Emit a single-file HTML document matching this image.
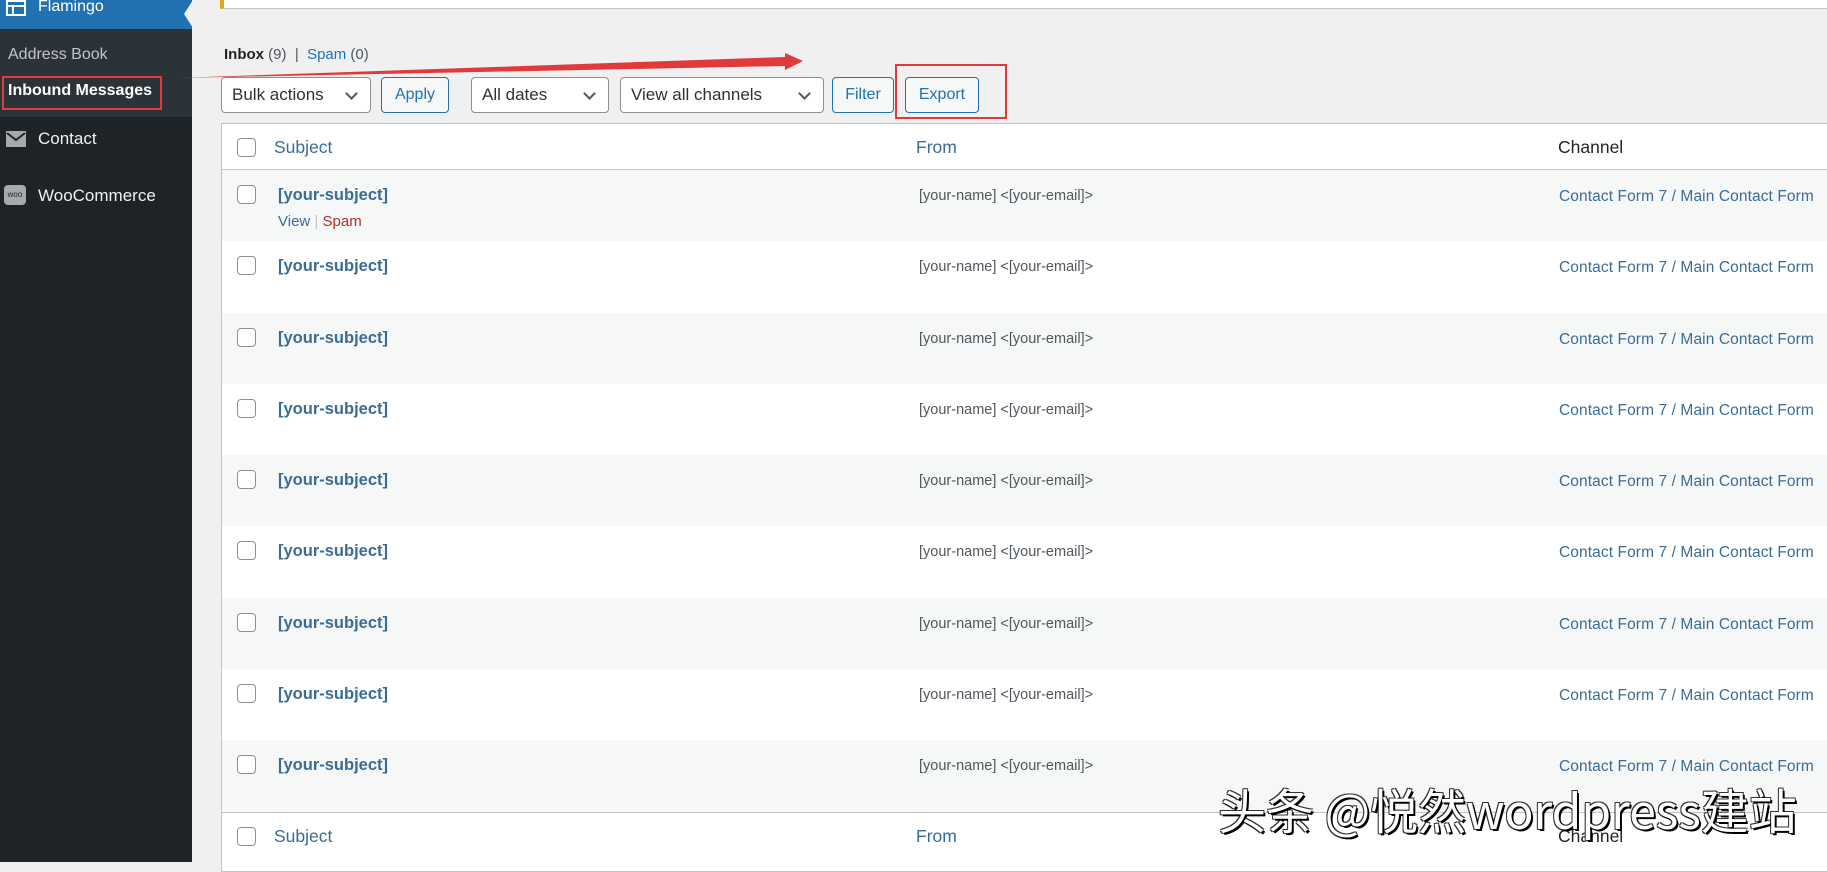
<!DOCTYPE html>
<html><head><meta charset="utf-8"><style>
*{box-sizing:border-box;margin:0;padding:0}
body{width:1827px;height:862px;overflow:hidden;background:#f0f0f1;font-family:"Liberation Sans","Noto Sans CJK SC",sans-serif;position:relative;color:#3c434a}
.sb{position:absolute;left:0;top:0;width:192px;height:862px;background:#1d2327}
.fl{position:absolute;left:0;top:0;width:192px;height:29px;background:#2271b1;color:#fff;font-size:16px;padding:0 0 0 38px;line-height:14px}
.sub{position:absolute;left:0;top:29px;width:192px;height:88px;background:#2c3338}
.a{position:absolute;color:#fff;font-size:17px}
.box{position:absolute;border:2px solid #e03a3a}
.sel{position:absolute;top:77px;height:36px;background:#fff;border:1px solid #8c8f94;border-radius:4px;font-size:17px;color:#2c3338;padding:8px 10px;line-height:18px}
.sel:after{content:"";position:absolute;right:14px;top:11px;width:7px;height:7px;border-right:2px solid #50575e;border-bottom:2px solid #50575e;transform:rotate(45deg)}
.btn{position:absolute;top:77px;height:36px;background:#f6f7f7;border:1px solid #2271b1;border-radius:4px;color:#2271b1;font-size:16px;text-align:center;line-height:34px}
.tbl{position:absolute;left:221px;top:123px;width:1606px;border-left:1px solid #c3c4c7}
.row{position:relative;height:71.3px}
.cb{position:absolute;left:15px;width:19px;height:19px;border:1.5px solid #8c8f94;border-radius:4px;background:#fff}
.s{position:absolute;left:56px;top:16px;font-size:16.5px;font-weight:bold;color:#3a6c96}
.f{position:absolute;left:697px;top:18px;font-size:14.5px;color:#50575e}
.c{position:absolute;left:1337px;top:18px;font-size:15.5px;color:#3a6c96;letter-spacing:0.1px}
.h{height:47px;background:#fff;border-bottom:1px solid #c3c4c7;border-top:1px solid #c3c4c7}
.h span{position:absolute;top:13px;font-size:17.5px;color:#3a6c96}
</style></head><body>
<div class="sb">
 <div class="fl"><svg style="position:absolute;left:6px;top:0" width="20" height="16"><rect x="1" y="1" width="18" height="14" fill="none" stroke="#fff" stroke-width="2"/><line x1="1" y1="6" x2="19" y2="6" stroke="#fff" stroke-width="2"/><line x1="7" y1="6" x2="7" y2="15" stroke="#fff" stroke-width="2"/></svg>Flamingo</div>
 <div style="position:absolute;left:184px;top:0;width:0;height:0;border-top:14px solid transparent;border-bottom:14px solid transparent;border-right:9px solid #f0f0f1"></div>
 <div class="sub"></div>
 <div class="a" style="left:8px;top:46px;color:#c3c4c7;font-size:16px">Address Book</div>
 <div class="a" style="left:8px;top:82px;font-weight:bold;font-size:16px">Inbound Messages</div>
 <div class="box" style="left:2px;top:76px;width:160px;height:34px"></div>
 <svg style="position:absolute;left:6px;top:131px" width="20" height="16"><rect x="0" y="0" width="20" height="16" fill="#a7aaad"/><polyline points="1,2 10,9 19,2" fill="none" stroke="#1d2327" stroke-width="2"/></svg>
 <div class="a" style="left:38px;top:129px;color:#f0f0f1">Contact</div>
 <div style="position:absolute;left:4px;top:185px;width:22px;height:20px;background:#a7aaad;border-radius:4px;font-size:8px;color:#1d2327;text-align:center;line-height:20px">woo</div>
 <div class="a" style="left:38px;top:186px;color:#f0f0f1">WooCommerce</div>
</div>
<div style="position:absolute;left:220px;top:0;width:1607px;height:9px;background:#fff;border-left:4px solid #dba617;border-bottom:1px solid #c3c4c7"></div>
<div style="position:absolute;left:224px;top:46px;font-size:15px;color:#50575e"><b style="color:#1d2327">Inbox</b> (9) &nbsp;| &nbsp;<span style="color:#2271b1">Spam</span> (0)</div>
<div class="sel" style="left:221px;width:150px">Bulk actions</div>
<div class="btn" style="left:381px;width:68px">Apply</div>
<div class="sel" style="left:471px;width:138px">All dates</div>
<div class="sel" style="left:620px;width:204px">View all channels</div>
<div class="btn" style="left:832px;width:62px">Filter</div>
<div class="btn" style="left:905px;width:74px">Export</div>
<div class="box" style="left:895px;top:64px;width:112px;height:55px"></div>
<svg style="position:absolute;left:0;top:0" width="820" height="90"><polygon points="175,78 785,57 785,53 803,61 785,70 785,66" fill="#e03a3a"/></svg>
<div class="tbl">
 <div class="row h"><div class="cb" style="top:14px"></div><span style="left:52px">Subject</span><span style="left:694px">From</span><span style="left:1336px;color:#1d2327">Channel</span></div>
 <div class="row" style="background:#f6f7f7"><div class="cb" style="top:15px"></div><div class="s">[your-subject]</div><div style="position:absolute;left:56px;top:43px;font-size:15px;color:#3a6c96">View <span style="color:#c3c4c7">|</span> <span style="color:#b32d2e">Spam</span></div><div class="f">[your-name] &lt;[your-email]&gt;</div><div class="c">Contact Form 7 / Main Contact Form</div></div>
 <div class="row" style="background:#fff"><div class="cb" style="top:15px"></div><div class="s">[your-subject]</div><div class="f">[your-name] &lt;[your-email]&gt;</div><div class="c">Contact Form 7 / Main Contact Form</div></div>
 <div class="row" style="background:#f6f7f7"><div class="cb" style="top:15px"></div><div class="s">[your-subject]</div><div class="f">[your-name] &lt;[your-email]&gt;</div><div class="c">Contact Form 7 / Main Contact Form</div></div>
 <div class="row" style="background:#fff"><div class="cb" style="top:15px"></div><div class="s">[your-subject]</div><div class="f">[your-name] &lt;[your-email]&gt;</div><div class="c">Contact Form 7 / Main Contact Form</div></div>
 <div class="row" style="background:#f6f7f7"><div class="cb" style="top:15px"></div><div class="s">[your-subject]</div><div class="f">[your-name] &lt;[your-email]&gt;</div><div class="c">Contact Form 7 / Main Contact Form</div></div>
 <div class="row" style="background:#fff"><div class="cb" style="top:15px"></div><div class="s">[your-subject]</div><div class="f">[your-name] &lt;[your-email]&gt;</div><div class="c">Contact Form 7 / Main Contact Form</div></div>
 <div class="row" style="background:#f6f7f7"><div class="cb" style="top:15px"></div><div class="s">[your-subject]</div><div class="f">[your-name] &lt;[your-email]&gt;</div><div class="c">Contact Form 7 / Main Contact Form</div></div>
 <div class="row" style="background:#fff"><div class="cb" style="top:15px"></div><div class="s">[your-subject]</div><div class="f">[your-name] &lt;[your-email]&gt;</div><div class="c">Contact Form 7 / Main Contact Form</div></div>
 <div class="row" style="background:#f6f7f7"><div class="cb" style="top:15px"></div><div class="s">[your-subject]</div><div class="f">[your-name] &lt;[your-email]&gt;</div><div class="c">Contact Form 7 / Main Contact Form</div></div>
 <div class="row h" style="height:60px"><div class="cb" style="top:14px"></div><span style="left:52px">Subject</span><span style="left:694px">From</span><span style="left:1336px;color:#1d2327">Channel</span></div>
</div>
<div style="position:absolute;left:1218px;top:781px;font-size:48px;color:#fff;font-family:'Noto Sans CJK SC',sans-serif;line-height:54px;text-shadow:2px 2px 0 #000,-1px -1px 0 #333,1px -1px 0 #333,-1px 1px 0 #333">头条 @悦然wordpress建站</div>
</body></html>
